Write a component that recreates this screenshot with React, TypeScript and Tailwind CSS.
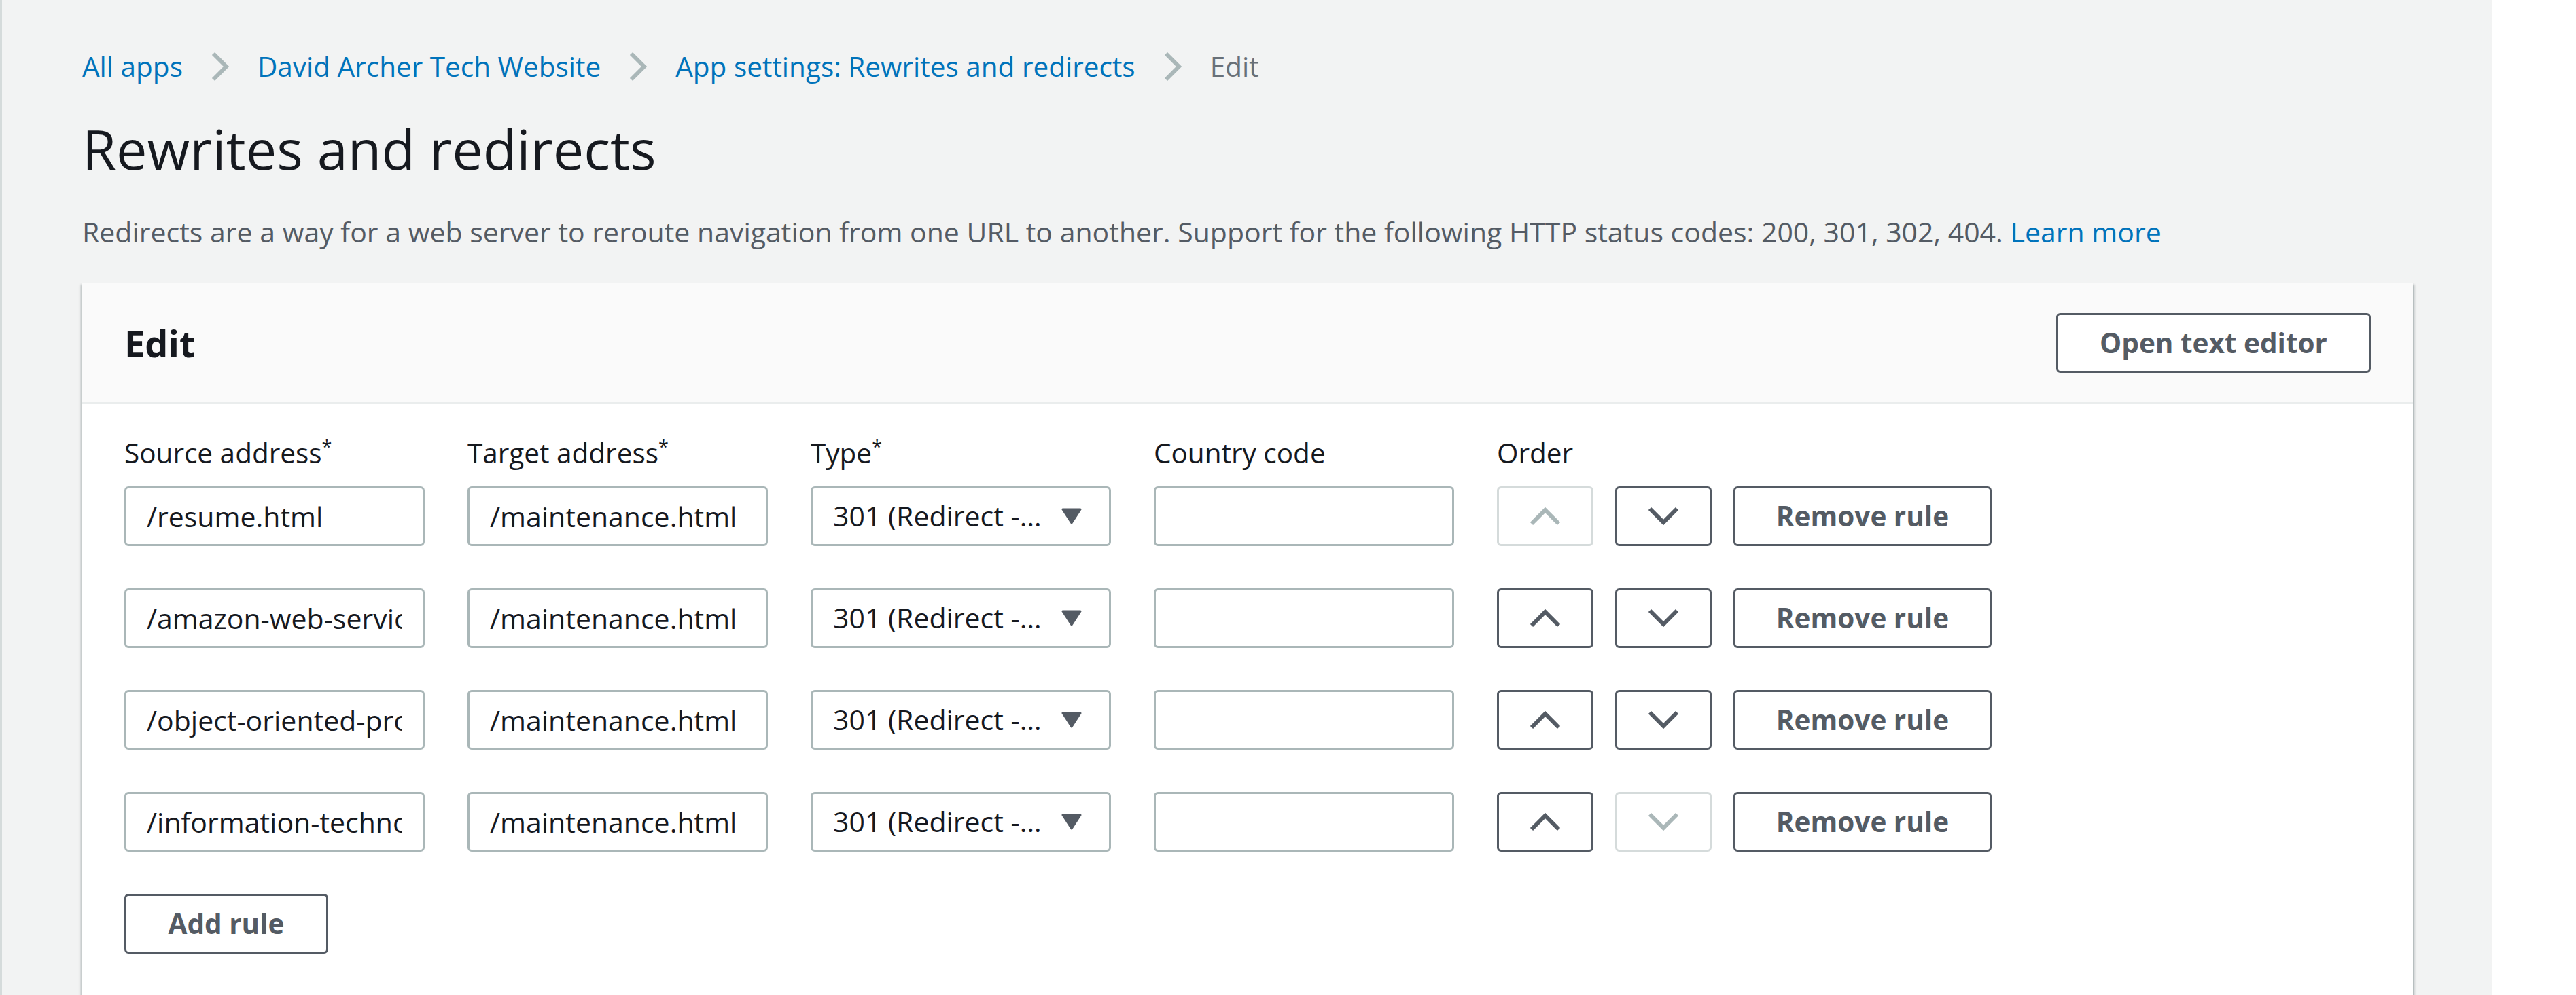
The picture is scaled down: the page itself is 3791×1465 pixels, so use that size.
import React from "react";

type Rule = {
  source: string;
  target: string;
  canUp: boolean;
  canDown: boolean;
};

const rules: Rule[] = [
  { source: "/resume.html", target: "/maintenance.html", canUp: false, canDown: true },
  { source: "/amazon-web-services.html", target: "/maintenance.html", canUp: true, canDown: true },
  { source: "/object-oriented-programming.html", target: "/maintenance.html", canUp: true, canDown: true },
  { source: "/information-technology.html", target: "/maintenance.html", canUp: true, canDown: false },
];

function Crumb() {
  return (
    <svg width="26" height="44" viewBox="0 0 26 44" className="mx-[42px] shrink-0">
      <polyline points="3,3 22,22 3,41" fill="none" stroke="#aab7b8" strokeWidth="6" />
    </svg>
  );
}

function Chevron({ dir, disabled }: { dir: "up" | "down"; disabled: boolean }) {
  const color = disabled ? "#aab7b8" : "#545b64";
  return (
    <svg width="46" height="28" viewBox="0 0 46 28">
      {dir === "up" ? (
        <polyline points="3,25 23,5 43,25" fill="none" stroke={color} strokeWidth="6" />
      ) : (
        <polyline points="3,3 23,23 43,3" fill="none" stroke={color} strokeWidth="6" />
      )}
    </svg>
  );
}

function Label({ text, required }: { text: string; required?: boolean }) {
  return (
    <div className="w-[442px] text-[40.5px] leading-[60px] text-[#16191f]">
      {text}
      {required && <span className="align-[14px] text-[27px] leading-none">*</span>}
    </div>
  );
}

const fieldClass =
  "h-[88px] w-[442px] rounded-[6px] border-[3px] border-[#aab7b8] bg-white px-[30px] text-[41px] text-[#16191f] outline-none";

const btnClass =
  "flex h-[88px] items-center justify-center rounded-[6px] border-[3px] border-[#545b64] bg-white text-[40.5px] font-bold text-[#545b64]";

function RuleRow({ rule }: { rule: Rule }) {
  return (
    <div className="flex items-center gap-[63px]">
      <input readOnly value={rule.source} className={fieldClass} />
      <input readOnly value={rule.target} className={fieldClass} />
      <div className={`${fieldClass} flex items-center justify-between pr-[40px]`}>
        <span className="whitespace-nowrap">301 (Redirect -…</span>
        <svg width="30" height="24" viewBox="0 0 30 24">
          <path d="M2 2 H28 L15 22 Z" fill="#545b64" stroke="#545b64" strokeWidth="3" strokeLinejoin="round" />
        </svg>
      </div>
      <input readOnly value="" className={fieldClass} />
      <div className="flex items-center gap-[32px]">
        <button
          className={`flex h-[88px] w-[142px] items-center justify-center rounded-[6px] border-[3px] bg-white ${
            rule.canUp ? "border-[#545b64]" : "border-[#d5dbdb]"
          }`}
        >
          <Chevron dir="up" disabled={!rule.canUp} />
        </button>
        <button
          className={`flex h-[88px] w-[142px] items-center justify-center rounded-[6px] border-[3px] bg-white ${
            rule.canDown ? "border-[#545b64]" : "border-[#d5dbdb]"
          }`}
        >
          <Chevron dir="down" disabled={!rule.canDown} />
        </button>
        <button className={`${btnClass} w-[380px]`}>Remove rule</button>
      </div>
    </div>
  );
}

export default function App() {
  return (
    <div className="flex h-screen overflow-hidden bg-white font-['Open_Sans',sans-serif]">
      {/* Main content */}
      <div className="flex w-[3667px] shrink-0 flex-col border-l-[3px] border-[#d5dbdb] bg-[#f2f3f3] pl-[118px] pr-[116px] pt-[68px]">
        {/* Breadcrumbs */}
        <div className="flex items-center text-[40.5px] leading-[60px]">
          <span className="text-[#0073bb]">All apps</span>
          <Crumb />
          <span className="text-[#0073bb]">David Archer Tech Website</span>
          <Crumb />
          <span className="text-[#0073bb]">App settings: Rewrites and redirects</span>
          <Crumb />
          <span className="text-[#687078]">Edit</span>
        </div>

        {/* Title */}
        <h1 className="mt-[37px] text-[81px] leading-[108px] text-[#16191f]">Rewrites and redirects</h1>

        {/* Description */}
        <p className="mt-[38px] text-[41px] leading-[60px] text-[#545b64]">
          Redirects are a way for a web server to reroute navigation from one URL to another. Support for the
          following HTTP status codes: 200, 301, 302, 404. <span className="text-[#0073bb]">Learn more</span>
        </p>

        {/* Edit card */}
        <div className="mt-[45px] bg-white shadow-[0_3px_3px_0_rgba(0,28,36,0.3),3px_3px_3px_0_rgba(0,28,36,0.15),-3px_3px_3px_0_rgba(0,28,36,0.15)]">
          <div className="flex items-center justify-between border-b-[3px] border-[#eaeded] bg-[#fafafa] px-[62px] pb-[43px] pt-[45px]">
            <h2 className="text-[54px] font-bold leading-[66px] text-[#16191f]">Edit</h2>
            <button className={`${btnClass} w-[463px]`}>Open text editor</button>
          </div>

          <div className="px-[62px] pb-[80px] pt-[42px]">
            <div className="mb-[19px] flex gap-[63px]">
              <Label text="Source address" required />
              <Label text="Target address" required />
              <Label text="Type" required />
              <Label text="Country code" />
              <Label text="Order" />
            </div>
            <div className="flex flex-col gap-[62px]">
              {rules.map((r) => (
                <RuleRow key={r.source} rule={r} />
              ))}
            </div>
            <button className={`${btnClass} mt-[62px] w-[300px]`}>Add rule</button>
          </div>
        </div>
      </div>

      {/* Right side panel */}
      <div className="flex-1 bg-white" />
    </div>
  );
}
